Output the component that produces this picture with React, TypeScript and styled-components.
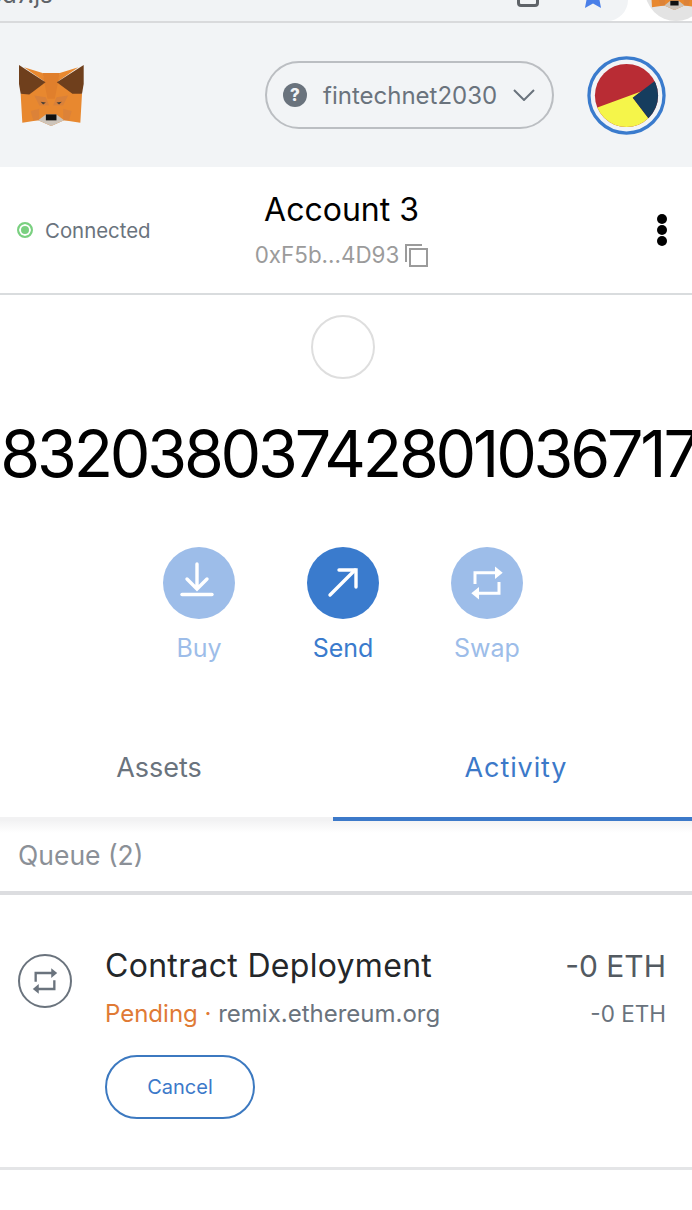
import React, { FC } from "react";
import styled, { createGlobalStyle } from "styled-components";

const GlobalStyle = createGlobalStyle`
  html, body {
    margin: 0;
    padding: 0;
    background: #fff;
  }
  * {
    box-sizing: border-box;
  }
`;

const Root = styled.div`
  display: flex;
  flex-direction: column;
  width: 692px;
  height: 1210px;
  overflow: hidden;
  background: #fff;
  font-family: Inter, "Liberation Sans", sans-serif;
`;

/* browser chrome cut off at the top of the shot */
const BrowserBar = styled.div`
  display: flex;
  flex-shrink: 0;
  height: 23px;
  overflow: hidden;
  border-bottom: 2px solid #d9dadc;
`;

const Omnibox = styled.div`
  display: flex;
  flex-shrink: 0;
  align-items: flex-end;
  justify-content: space-between;
  width: 628px;
  height: 21px;
  padding: 0 21px 0 0;
  background: #f1f3f5;
  border-bottom-right-radius: 22px;
`;

const UrlText = styled.span`
  margin-bottom: 14px;
  margin-left: -12px;
  font-size: 24px;
  line-height: 24px;
  color: #5f6368;
`;

const OmniIcons = styled.div`
  display: flex;
  align-items: flex-end;
  gap: 40px;
`;

const TabSquare = styled.span`
  display: block;
  width: 22px;
  height: 22px;
  margin-bottom: 14px;
  border: 3px solid #5f6368;
  border-radius: 4px;
`;

const StarIcon = styled.svg`
  display: block;
  width: 28px;
  height: 28px;
  margin-bottom: 11px;
`;

const ProfileBubble = styled.div`
  flex-shrink: 0;
  width: 62px;
  height: 62px;
  overflow: hidden;
  margin-left: 17px;
  border-radius: 50%;
  background: #e3e3e3;
`;

const BubbleWrap = styled.div`
  display: flex;
  align-items: flex-end;
  height: 21px;
`;

const Header = styled.header`
  display: flex;
  flex-shrink: 0;
  align-items: center;
  height: 144px;
  padding: 0 26px 0 18px;
  background: #f2f4f6;
`;

const FoxLogo = styled.svg`
  display: block;
  width: 67px;
  height: 63px;
  margin-right: auto;
`;

const NetworkPill = styled.div`
  display: flex;
  align-items: center;
  width: 289px;
  height: 68px;
  padding: 0 17px 0 16px;
  border: 2px solid #bbbec2;
  border-radius: 34px;
`;

const NetworkBadge = styled.span`
  display: flex;
  flex-shrink: 0;
  align-items: center;
  justify-content: center;
  width: 24px;
  height: 24px;
  border-radius: 50%;
  background: #6a737d;
  color: #f2f4f6;
  font-size: 17px;
  font-weight: 800;
`;

const NetworkName = styled.span`
  flex: 1;
  margin-left: 16px;
  font-size: 24px;
  color: #6a737d;
  white-space: nowrap;
`;

const Avatar = styled.svg`
  display: block;
  flex-shrink: 0;
  width: 79px;
  height: 79px;
  margin-left: 33px;
`;

const AccountRow = styled.section`
  display: grid;
  flex-shrink: 0;
  grid-template-columns: 1fr 1fr 1fr;
  align-items: center;
  height: 128px;
  padding: 0 26px 0 17px;
  border-bottom: 2px solid #d9dcde;
`;

const Status = styled.div`
  display: flex;
  align-items: center;
  gap: 12px;
  font-size: 20.400px;
  color: #6a737d;
`;

const StatusDot = styled.span`
  display: block;
  flex-shrink: 0;
  width: 16px;
  height: 16px;
  border: 2px solid #7ad080;
  border-radius: 50%;
  background: #7ad080;
  box-shadow: inset 0 0 0 2px #fff;
`;

const AccountInfo = styled.div`
  display: flex;
  flex-direction: column;
  align-items: center;
  gap: 12px;
  white-space: nowrap;
`;

const AccountName = styled.div`
  font-size: 32px;
  line-height: 38px;
  color: #000;
`;

const AddressRow = styled.div`
  display: flex;
  align-items: center;
  gap: 6px;
  font-size: 22.400px;
  line-height: 28px;
  color: #9b9b9b;
`;

const CopyIcon = styled.svg`
  display: block;
  width: 23px;
  height: 23px;
`;

const MoreDots = styled.div`
  display: flex;
  flex-direction: column;
  justify-self: end;
  gap: 1px;
  margin-right: -1px;
`;

const Dot = styled.span`
  display: block;
  width: 10px;
  height: 10px;
  border-radius: 50%;
  background: #000;
`;

const TokenCircle = styled.div`
  flex-shrink: 0;
  width: 64px;
  height: 64px;
  margin: 20px auto 0;
  transform: translateX(-3px);
  border: 2px solid #dedede;
  border-radius: 50%;
`;

const Balance = styled.div`
  display: flex;
  flex-shrink: 0;
  justify-content: center;
  height: 70px;
  margin-top: 40px;
  padding-left: 5px;
  font-size: 64.500px;
  line-height: 70px;
  letter-spacing: -3.200px;
  color: #000;
  white-space: nowrap;
`;

const Actions = styled.div`
  display: flex;
  flex-shrink: 0;
  justify-content: center;
  gap: 72px;
  margin-top: 58px;
  padding-right: 6px;
`;

const Action = styled.div<{ $active?: boolean }>`
  display: flex;
  flex-direction: column;
  align-items: center;
  gap: 12px;
  width: 72px;
  font-size: 25px;
  line-height: 34px;
  color: ${(p) => (p.$active ? "#3a7bcd" : "#9dbde9")};
`;

const ActionCircle = styled.span<{ $active?: boolean }>`
  display: flex;
  align-items: center;
  justify-content: center;
  width: 72px;
  height: 72px;
  border-radius: 50%;
  background: ${(p) => (p.$active ? "#3a7bcd" : "#9dbde9")};
`;

const Tabs = styled.nav`
  display: grid;
  flex-shrink: 0;
  grid-template-columns: 333px 359px;
  height: 92px;
  margin-top: 64px;
`;

const Tab = styled.div<{ $active?: boolean }>`
  display: flex;
  justify-content: center;
  padding: 21px ${(p) => (p.$active ? "0 0 7px" : "15px 0 0")};
  font-size: 27px;
  line-height: 36px;
  letter-spacing: ${(p) => (p.$active ? "0.9px" : "0")};
  color: ${(p) => (p.$active ? "#3c79c9" : "#6a737d")};
  border-bottom: 4px solid ${(p) => (p.$active ? "#3c79c9" : "#f2f2f3")};
`;

const QueueHeading = styled.div`
  flex-shrink: 0;
  height: 74px;
  padding: 17px 18px 0;
  font-size: 26.500px;
  line-height: 34px;
  color: #8b9097;
  background: linear-gradient(#f3f3f4, #fff 12px);
  border-bottom: 4px solid #dcdde0;
`;

const TxRow = styled.article`
  display: flex;
  flex-shrink: 0;
  align-items: flex-start;
  height: 275px;
  padding: 52px 26px 0 18px;
  border-bottom: 3px solid #e4e5e7;
`;

const TxIcon = styled.span`
  display: flex;
  flex-shrink: 0;
  align-items: center;
  justify-content: center;
  width: 54px;
  height: 54px;
  margin-top: 7px;
  border: 2px solid #6a737d;
  border-radius: 50%;
`;

const TxBody = styled.div`
  display: flex;
  flex: 1;
  flex-direction: column;
  align-items: flex-start;
  margin-left: 33px;
`;

const TxTitle = styled.div`
  font-size: 32px;
  line-height: 38px;
  letter-spacing: 0.3px;
  color: #24272a;
  white-space: nowrap;
`;

const TxMeta = styled.div`
  margin-top: 13px;
  font-size: 24px;
  line-height: 32px;
  color: #6a737d;
  white-space: nowrap;
`;

const Pending = styled.span`
  color: #e07a35;
`;

const CancelButton = styled.button`
  width: 150px;
  height: 64px;
  margin-top: 25px;
  padding-bottom: 2px;
  border: 2px solid #3c79c0;
  border-radius: 32px;
  background: #fff;
  color: #3c79c9;
  font-family: inherit;
  font-size: 20px;
`;

const TxAmounts = styled.div`
  display: flex;
  flex-direction: column;
  align-items: flex-end;
  white-space: nowrap;
`;

const PrimaryAmount = styled.div`
  font-size: 30px;
  line-height: 38px;
  color: #535a61;
`;

const SecondaryAmount = styled.div`
  margin-top: 13px;
  font-size: 22.500px;
  line-height: 32px;
  color: #6a737d;
`;

// polygons are in the 0-360 x 0-300 space of the logo crop
const FoxShapes: FC = () => (
  <>
    <polygon fill="#e8882f" points="62,160 137,125 128,97 180,97 171,125 247,160 242,247 193,240 154,257 115,240 67,247" />
    <polygon fill="#e8882f" points="72,80 128,97 137,125" />
    <polygon fill="#e8882f" points="236,80 180,97 171,125" />
    <polygon fill="#e07f2c" points="128,97 180,97 165,175 143,175" />
    <polygon fill="#6f3f1c" points="57,73 137,125 88,162 62,160 57,130" />
    <polygon fill="#6f3f1c" points="252,73 171,125 218,160 247,160 252,130" />
    <polygon fill="#d9813a" points="103,165 138,170 148,195 118,195" />
    <polygon fill="#d9813a" points="205,165 170,170 160,195 190,195" />
    <polygon fill="#4a4038" points="122,184 138,186 130,192" />
    <polygon fill="#4a4038" points="186,184 170,186 178,192" />
    <polygon fill="#dc8238" points="92,212 118,205 118,240 100,240" />
    <polygon fill="#dc8238" points="216,212 190,205 190,240 208,240" />
    <polygon fill="#cdc4ba" points="115,240 138,222 170,222 193,240 154,257" />
    <rect x="138" y="222" width="32" height="18" fill="#111" />
  </>
);

const SwapGlyph: FC<{ color: string; size: number }> = ({ color, size }) => (
  <svg width={size} height={size} viewBox="0 0 36 36" fill="none" stroke={color} strokeWidth="3">
    <path d="M6 19V7.700h21" />
    <path d="M26 1.500 33.700 7.700 26 14z" fill={color} stroke="none" />
    <path d="M30 17v11.300H9" />
    <path d="M10 22 2.300 28.300 10 34.500z" fill={color} stroke="none" />
  </svg>
);

export default function App() {
  return (
    <Root>
      <GlobalStyle />
      <BrowserBar>
        <Omnibox>
          <UrlText>ed7.js</UrlText>
          <OmniIcons>
            <TabSquare />
            <StarIcon viewBox="0 0 24 24">
              <path fill="#4a7fe8" d="M12 1l3.400 7.300 7.600.9-5.600 5.300 1.500 7.800L12 18.400l-6.900 3.900 1.500-7.800L1 9.200l7.600-.9z" />
            </StarIcon>
          </OmniIcons>
        </Omnibox>
        <BubbleWrap>
          <ProfileBubble>
            <svg width="62" height="62" viewBox="40 60 240 240">
              <FoxShapes />
            </svg>
          </ProfileBubble>
        </BubbleWrap>
      </BrowserBar>

      <Header>
        <FoxLogo viewBox="54 70 202 190">
          <FoxShapes />
        </FoxLogo>
        <NetworkPill>
          <NetworkBadge>?</NetworkBadge>
          <NetworkName>fintechnet2030</NetworkName>
          <svg width="22" height="12" viewBox="0 0 22 12" fill="none" stroke="#6a737d" strokeWidth="2">
            <path d="M1 1l10 10L21 1" />
          </svg>
        </NetworkPill>
        <Avatar viewBox="0 0 240 240">
          <defs>
            <clipPath id="avatar-clip">
              <circle cx="120" cy="120" r="96" />
            </clipPath>
          </defs>
          <circle cx="120" cy="120" r="114" fill="none" stroke="#3a7bcd" strokeWidth="10" />
          <g clipPath="url(#avatar-clip)">
            <rect width="240" height="240" fill="#b92c34" />
            <polygon fill="#f5f54a" points="20,161 164,108 139,127 186,188 186,240 20,240" />
            <polygon fill="#163d5e" points="139,127 207,75 230,75 230,200 186,188" />
          </g>
        </Avatar>
      </Header>

      <AccountRow>
        <Status>
          <StatusDot />
          Connected
        </Status>
        <AccountInfo>
          <AccountName>Account 3</AccountName>
          <AddressRow>
            0xF5b...4D93
            <CopyIcon viewBox="0 0 23 23" fill="none" stroke="#9b9b9b" strokeWidth="2">
              <path d="M1 18V1h16" />
              <rect x="5" y="5" width="17" height="17" />
            </CopyIcon>
          </AddressRow>
        </AccountInfo>
        <MoreDots>
          <Dot />
          <Dot />
          <Dot />
        </MoreDots>
      </AccountRow>

      <TokenCircle />
      <Balance>83203803742801036717</Balance>

      <Actions>
        <Action>
          <ActionCircle>
            <svg width="44" height="44" viewBox="0 0 44 44" fill="none" stroke="#fff" strokeWidth="3.400" strokeLinecap="round">
              <path d="M20 3v24M10 18l10 10 10-10" />
              <path d="M5 33.500h30" />
            </svg>
          </ActionCircle>
          Buy
        </Action>
        <Action $active>
          <ActionCircle $active>
            <svg width="44" height="44" viewBox="0 0 44 44" fill="none" stroke="#fff" strokeWidth="3.400" strokeLinecap="round">
              <path d="M9 34 34 9" />
              <path d="M18 9h17v17" />
            </svg>
          </ActionCircle>
          Send
        </Action>
        <Action>
          <ActionCircle>
            <SwapGlyph color="#fff" size={36} />
          </ActionCircle>
          Swap
        </Action>
      </Actions>

      <Tabs>
        <Tab>Assets</Tab>
        <Tab $active>Activity</Tab>
      </Tabs>

      <QueueHeading>Queue (2)</QueueHeading>

      <TxRow>
        <TxIcon>
          <SwapGlyph color="#6a737d" size={28} />
        </TxIcon>
        <TxBody>
          <TxTitle>Contract Deployment</TxTitle>
          <TxMeta>
            <Pending>Pending ·</Pending> remix.ethereum.org
          </TxMeta>
          <CancelButton>Cancel</CancelButton>
        </TxBody>
        <TxAmounts>
          <PrimaryAmount>-0 ETH</PrimaryAmount>
          <SecondaryAmount>-0 ETH</SecondaryAmount>
        </TxAmounts>
      </TxRow>
    </Root>
  );
}
